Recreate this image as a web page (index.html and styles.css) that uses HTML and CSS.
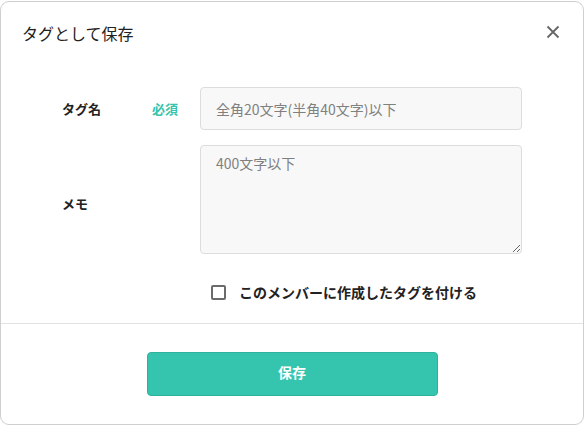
FILE: index.html
```
<!DOCTYPE html>
<html lang="ja">
<head>
<meta charset="utf-8">
<link rel="stylesheet" href="styles.css">
</head>
<body>
<div class="dialog">
  <div class="header">
    <div class="title">タグとして保存</div>
    <button class="close" aria-label="閉じる">
      <svg width="14" height="14" viewBox="0 0 14 14"><path d="M1.5 1.5 L12.5 12.5 M12.5 1.5 L1.5 12.5" stroke="#666" stroke-width="1.8" fill="none"/></svg>
    </button>
  </div>
  <div class="body">
    <div class="row">
      <div class="label">タグ名</div>
      <div class="req">必須</div>
      <input class="input" type="text" placeholder="全角20文字(半角40文字)以下">
    </div>
    <div class="row memo">
      <div class="label">メモ</div>
      <div class="req"></div>
      <textarea class="textarea" placeholder="400文字以下"></textarea>
    </div>
    <label class="check">
      <span class="box"></span>
      <span class="check-text">このメンバーに作成したタグを付ける</span>
    </label>
  </div>
  <div class="footer">
    <button class="save">保存</button>
  </div>
</div>
</body>
</html>
```
FILE: styles.css
```
* { box-sizing: border-box; }
html, body { margin: 0; padding: 0; background: #fff; }
body {
  font-family: "Noto Sans CJK JP", "Noto Sans", sans-serif;
  color: #222;
  width: 585px;
  height: 425px;
  overflow: hidden;
}
.dialog {
  margin-top: 1px;
  width: 584px;
  border: 1px solid #cfcfcf;
  border-radius: 9px;
  background: #fff;
}
.header {
  height: 64px;
  display: flex;
  align-items: center;
  justify-content: space-between;
  padding: 0 23px 0 21px;
}
.title {
  font-size: 16px;
  line-height: 22px;
  color: #222;
  margin-top: -3px;
}
.close {
  border: 0;
  background: none;
  padding: 0;
  width: 14px;
  height: 14px;
  display: flex;
  margin-top: -5px;
}
.body {
  padding: 21px 0 21px 61px;
}
.row {
  display: grid;
  grid-template-columns: 90px 48px 322px;
  align-items: center;
}
.row.memo { margin-top: 15px; }
.row.memo .label { padding-top: 7px; }
.label {
  font-size: 13px;
  font-weight: 700;
  color: #222;
}
.req {
  font-size: 13px;
  font-weight: 700;
  color: #35c4ad;
}
.input, .textarea {
  width: 322px;
  border: 1px solid #dcdcdc;
  border-radius: 4px;
  background: #f8f8f8;
  font-family: "Noto Sans CJK JP", "Noto Sans", sans-serif;
  font-size: 14px;
  color: #333;
  padding: 0 15px;
  margin: 0;
  outline: none;
}
.input { height: 43px; }
.textarea {
  height: 109px;
  padding-top: 7px;
  line-height: 20px;
  resize: vertical;
  display: block;
}
.input::placeholder, .textarea::placeholder { color: #808080; }
.check {
  margin-top: 28px;
  margin-left: 149px;
  display: flex;
  align-items: center;
  height: 20px;
}
.box {
  width: 15px;
  height: 15px;
  border: 2px solid #6b6b6b;
  border-radius: 2px;
  background: #fff;
  margin-right: 13px;
}
.check-text {
  font-size: 14px;
  font-weight: 700;
  color: #222;
}
.footer {
  border-top: 1px solid #e2e2e2;
  padding: 28px 0 28px;
  display: flex;
  justify-content: center;
}
.save {
  width: 291px;
  height: 44px;
  background: #35c4ad;
  border: 1px solid #2fb29d;
  border-radius: 4px;
  color: #fff;
  font-family: "Noto Sans CJK JP", "Noto Sans", sans-serif;
  font-size: 14px;
  font-weight: 700;
  padding: 0 0 4px;
}
```
